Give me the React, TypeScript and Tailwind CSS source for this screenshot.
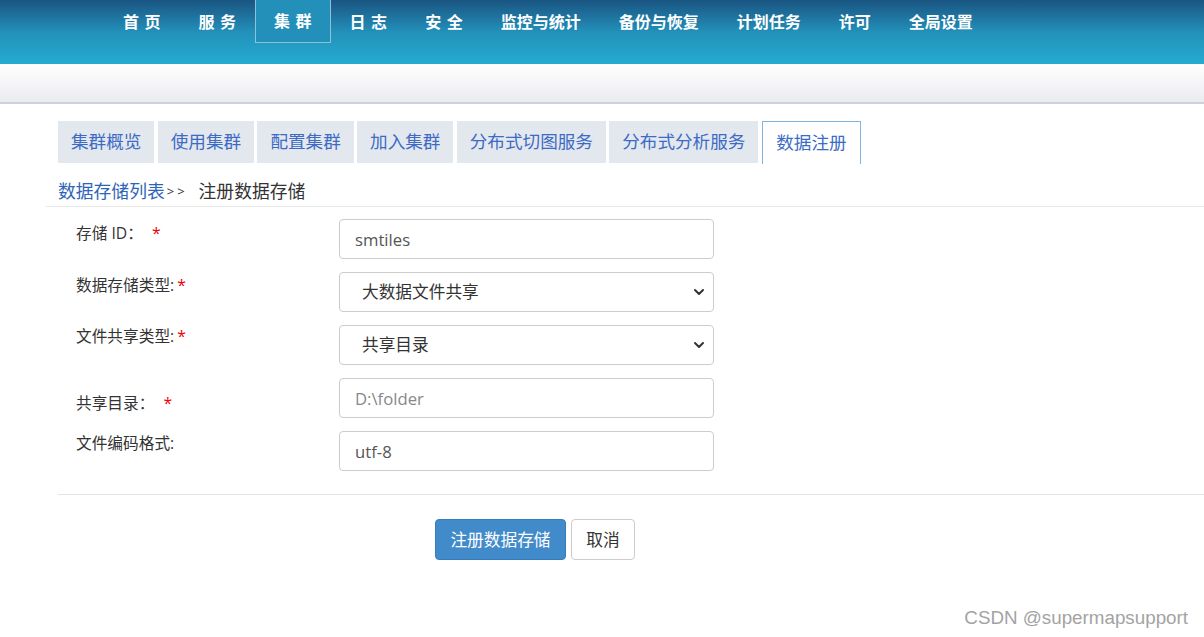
import { useState } from "react";

const navItems = [
  { label: ["首", "页"] },
  { label: ["服", "务"] },
  { label: ["集", "群"], active: true },
  { label: ["日", "志"] },
  { label: ["安", "全"] },
  { label: ["监控与统计"] },
  { label: ["备份与恢复"] },
  { label: ["计划任务"] },
  { label: ["许可"] },
  { label: ["全局设置"] },
];

const tabs = ["集群概览", "使用集群", "配置集群", "加入集群", "分布式切图服务", "分布式分析服务", "数据注册"];

function Chevron() {
  return (
    <svg
      className="pointer-events-none absolute right-[9px] top-1/2 -translate-y-1/2"
      width="12"
      height="8"
      viewBox="0 0 12 8"
      fill="none"
      stroke="#333"
      strokeWidth="2"
      strokeLinecap="round"
      strokeLinejoin="round"
    >
      <polyline points="2,2 6,6 10,2" />
    </svg>
  );
}

/**
 * Register data store page (cluster / data registration)
 */
export default function App() {
  const [storeId, setStoreId] = useState("smtiles");
  const [storeType, setStoreType] = useState("大数据文件共享");
  const [shareType, setShareType] = useState("共享目录");
  const [folder, setFolder] = useState("");
  const [encoding, setEncoding] = useState("utf-8");

  const inputClass =
    "h-[40px] w-[375px] rounded-[4px] border border-[#ccc] bg-white px-[15px] text-[16.7px] text-[#555] outline-none placeholder:text-[#888]";
  const selectClass =
    "h-[40px] w-[375px] appearance-none rounded-[4px] border border-[#ccc] bg-white pl-[22px] pr-[30px] text-[16.7px] text-[#333] outline-none";

  return (
    <div className="min-h-[637px] bg-white font-['Open_Sans','Noto_Sans_CJK_SC',sans-serif] text-[#333]">
      {/* top navigation */}
      <div className="h-[64px] bg-gradient-to-b from-[#1a5582] via-[#2291ba] to-[#26abd1]">
        <div className="flex pl-[104px]">
          {navItems.map((item) => (
            <div
              key={item.label.join("")}
              className={
                "flex h-[43px] items-center gap-[5.5px] text-[16px] font-bold leading-none text-white " +
                (item.active ? "border border-t-0 border-[#8ec2da] bg-[#2290b9] px-[18px]" : "px-[19px]")
              }
            >
              {item.label.map((c) => (
                <span key={c}>{c}</span>
              ))}
            </div>
          ))}
        </div>
      </div>
      <div className="h-[40px] border-b-2 border-[#cdd1dc] bg-gradient-to-b from-white to-[#ebecf0]" />

      <div className="pl-[46px]">
        {/* tabs */}
        <div className="ml-[12px] mt-[17px] flex gap-[3.3px]">
          {tabs.map((t) => {
            const active = t === "数据注册";
            return (
              <div
                key={t}
                className={
                  "flex h-[42px] items-center text-[17.6px] leading-none text-[#3d6bc4] " +
                  (active ? "h-[43px] border border-b-0 border-[#80b4e3] bg-white px-[13.5px]" : "bg-[#e3e8ef] px-[13px]")
                }
              >
                {t}
              </div>
            );
          })}
        </div>

        {/* breadcrumb */}
        <div className="flex h-[43px] items-start border-b border-[#e8e8e8] pl-[12px] pt-[16px] text-[17.8px] leading-[22px]">
          <span className="text-[#2f65b8]">数据存储列表</span>
          <span className="ml-[2px] mr-[11px] text-[13px] tracking-[3px] text-[#333]">&gt;&gt;</span>
          <span className="text-[#333]">注册数据存储</span>
        </div>

        {/* form */}
        <div className="flex flex-col gap-[13px] pl-[30px] pt-[12px] text-[15.7px]">
          <div className="flex">
            <label className="w-[263px] pt-[3px] leading-[22px]">
              存储 ID：<span className="ml-[9px] text-[#e00]">*</span>
            </label>
            <input className={inputClass} value={storeId} onChange={(e) => setStoreId(e.target.value)} />
          </div>
          <div className="flex">
            <label className="w-[263px] pt-[2px] leading-[22px]">
              数据存储类型:<span className="ml-[3px] text-[#e00]">*</span>
            </label>
            <div className="relative">
              <select className={selectClass} value={storeType} onChange={(e) => setStoreType(e.target.value)}>
                <option>大数据文件共享</option>
                <option>空间数据库</option>
              </select>
              <Chevron />
            </div>
          </div>
          <div className="flex">
            <label className="w-[263px] pt-0 leading-[22px]">
              文件共享类型:<span className="ml-[3px] text-[#e00]">*</span>
            </label>
            <div className="relative">
              <select className={selectClass} value={shareType} onChange={(e) => setShareType(e.target.value)}>
                <option>共享目录</option>
                <option>HDFS</option>
              </select>
              <Chevron />
            </div>
          </div>
          <div className="flex">
            <label className="w-[263px] pt-[14px] leading-[22px]">
              共享目录：<span className="ml-[9px] text-[#e00]">*</span>
            </label>
            <input
              className={inputClass}
              placeholder="D:\folder"
              value={folder}
              onChange={(e) => setFolder(e.target.value)}
            />
          </div>
          <div className="flex">
            <label className="w-[263px] pt-[1px] leading-[22px]">文件编码格式:</label>
            <input className={inputClass} value={encoding} onChange={(e) => setEncoding(e.target.value)} />
          </div>
        </div>

        <div className="ml-[12px] mt-[23px] border-t border-[#e5e5e5]" />

        {/* actions */}
        <div className="ml-[389px] mt-[24px] flex gap-[5px]">
          <button
            type="button"
            className="h-[41px] w-[131px] rounded-[4px] border border-[#357ebd] bg-[#428bca] text-[16.7px] text-white"
          >
            注册数据存储
          </button>
          <button
            type="button"
            className="h-[41px] w-[64px] rounded-[4px] border border-[#ccc] bg-white text-[16.7px] text-[#333]"
          >
            取消
          </button>
        </div>
      </div>

      <div className="mt-[47px] pr-[16px] text-right font-['Liberation_Sans',sans-serif] text-[18.8px] leading-[22px] text-[#a3a3a3]">
        CSDN @supermapsupport
      </div>
    </div>
  );
}
